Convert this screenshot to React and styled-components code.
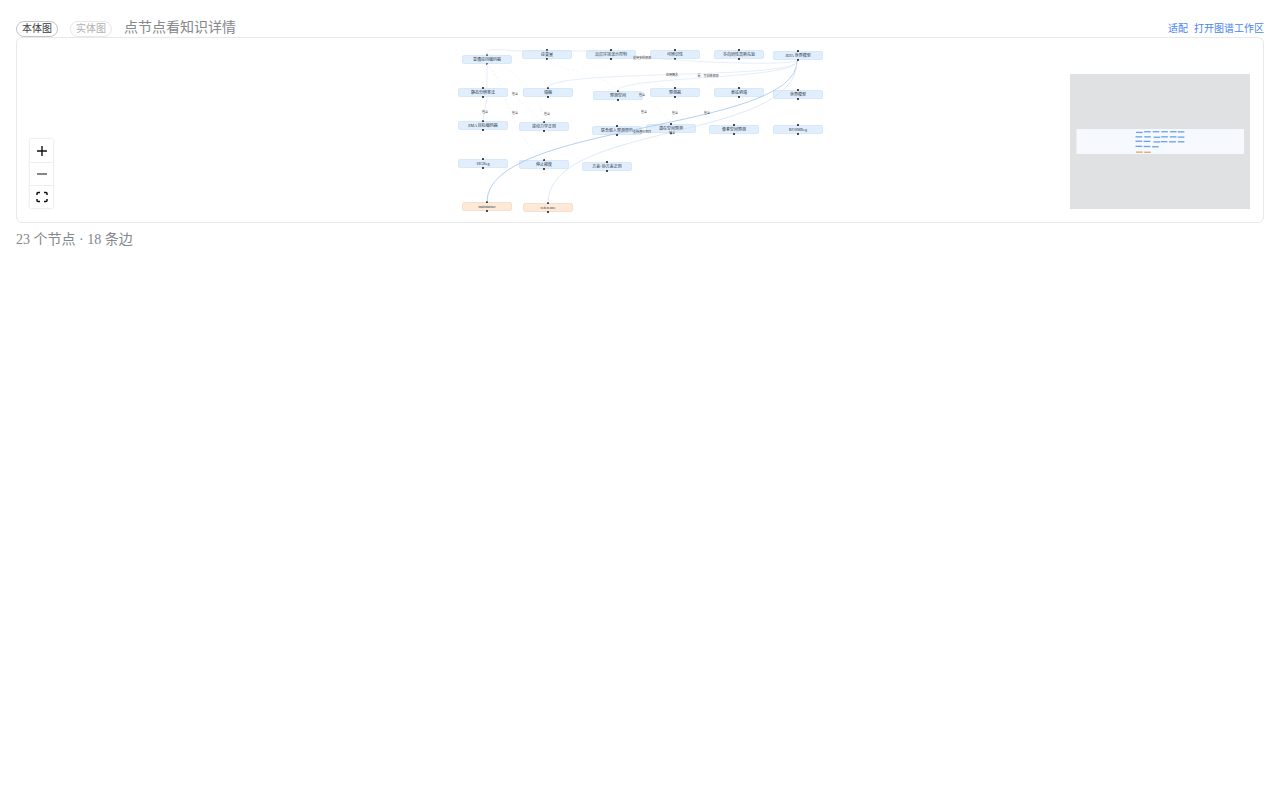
import React from 'react';
import styled, { createGlobalStyle } from 'styled-components';

const Global = createGlobalStyle`
  * { box-sizing: border-box; }
  body { margin: 0; background: #fff; font-family: "Liberation Serif", "Noto Sans CJK SC", serif; }
`;
const Page = styled.main`padding: 18px 16px;`;
const Toolbar = styled.header`
  display: flex; align-items: center; height: 19px;
`;
const Tab = styled.button`
  width: 42px; height: 16px; margin: 2px 12px 0 0; padding: 0;
  border: 1px solid ${p => (p['aria-pressed'] ? '#c2c4c6' : '#e6e7e8')};
  border-radius: 8px; background: #fff; font: inherit; font-size: 10px; line-height: 14px;
  color: ${p => (p['aria-pressed'] ? '#3c3c3c' : '#b0b0b0')};
`;
const Hint = styled.span`font-size: 14px; line-height: 18px; color: #84878b;`;
const Links = styled.nav`
  display: flex; gap: 6px; margin-left: auto; padding-top: 2px; font-size: 10px; line-height: 18px;
  a { color: #4a86ee; text-decoration: none; }
`;
const Canvas = styled.section`
  position: relative; height: 186px; border: 1px solid #e8e9ea; border-radius: 6px; overflow: hidden;
`;
const Graph = styled.div`position: relative; width: 364px; height: 184px; margin: 0 auto;`;
const Edges = styled.svg`position: absolute; inset: 0; width: 364px; height: 184px; fill: none;`;
const Node = styled.div`
  position: absolute; left: ${p => p.$x}px; top: ${p => p.$y}px; width: 50px; height: 9px;
  border: 1px solid ${p => (p.$warm ? '#f8dfca' : '#d8e8fa')}; border-radius: 2px;
  background: ${p => (p.$warm ? '#fce9d9' : '#e1eefc')};
  color: #26323f; font-size: 4px; line-height: 7px; text-align: center; white-space: nowrap;
  &::before, &::after {
    content: ""; position: absolute; left: 23px; width: 2px; height: 2px; border-radius: 1px; background: #111;
  }
  &::before { top: -2px; }
  &::after { bottom: -2px; }
`;
const EdgeLabel = styled.span`
  position: absolute; left: ${p => p.$x}px; top: ${p => p.$y}px; transform: translate(-50%, -50%);
  font-size: 3px; line-height: 3px; color: #333; white-space: nowrap;
`;
const Controls = styled.div`
  position: absolute; left: 12px; bottom: 13px; display: flex; flex-direction: column;
  width: 25px; border: 1px solid #f0f0f0; border-radius: 3px; box-shadow: 0 0 2px #0001;
`;
const Control = styled.button`
  display: grid; place-items: center; height: 23px; padding: 0; border: 0; background: #fff;
  & + & { border-top: 1px solid #eee; }
  svg { width: 12px; height: 12px; fill: none; stroke: #111; }
`;
const MiniMap = styled.svg`
  position: absolute; right: 13px; bottom: 13px; width: 180px; height: 135px; background: #dfe1e3;
`;
const Status = styled.footer`padding-top: 8px; font-size: 14px; line-height: 18px; color: #84878b;`;

const nodes = [
  [4, 17, '普通应用编码器'], [64, 12, '应变量'], [128, 12, '高层环境演示控制'], [192, 12, '可辨识性'], [256, 12, '多向同性高斯先验'], [315, 13, 'JEPA 世界模型'],
  [0, 50, '静态分辨率法'], [65, 50, '塌缩'], [135, 53, '预测空间'], [192, 50, '预测器'], [256, 50, '表征坍塌'], [315, 52, '世界模型'],
  [0, 83, 'EMA 目标编码器'], [61, 84, '逆动力学正则'], [134, 88, '联合嵌入预测架构'], [188, 86, '潜在空间预测'], [251, 87, '像素空间预测'], [315, 87, 'KOSMReg'],
  [0, 121, 'SIGReg'], [61, 122, '停止梯度'], [124, 124, '方差-协方差正则'],
  [4, 164, 'maintainer', true], [65, 165, 'reference', true],
];
const labels = [
  [184, 20, '支持多样预测'], [214, 37, '应用概念'], [250, 38, '是、可训练预测'],
  [57, 56, '包含'], [184, 57, '包含'], [27, 74, '包含'], [57, 75, '包含'], [89, 76, '包含'],
  [186, 74, '包含'], [217, 75, '包含'], [249, 75, '包含'], [184, 94, '支持潜在空间'], [214, 95, '包含'],
];

export default function App() {
  return (
    <>
      <Global />
      <Page>
        <Toolbar>
          <Tab aria-pressed={true}>本体图</Tab>
          <Tab aria-pressed={false}>实体图</Tab>
          <Hint>点节点看知识详情</Hint>
          <Links><a href="#fit">适配</a><a href="#workspace">打开图谱工作区</a></Links>
        </Toolbar>
        <Canvas>
          <Graph>
            {nodes.map(([x, y, t, warm], i) => <Node key={i} $x={x} $y={y} $warm={warm}>{t}</Node>)}
            <Edges viewBox="0 0 364 184" aria-hidden="true">
              <g stroke="#d5e3f5" strokeWidth="0.6">
                <path d="M29 15V50M29 59L25 83" />
                <path d="M29 17C29 8 40 13 70 13H128C190 22 310 29 339 23" />
                <path d="M90 50C90 31 339 42 339 23M160 53C160 38 339 42 339 23" />
              </g>
              <g stroke="#e3ebf5" strokeWidth="0.5" strokeDasharray="2 2">
                <path d="M29 26C44 45 57 60 86 84M29 26C50 50 50 95 86 122M29 15C60 38 85 60 86 84" />
                <path d="M89 21C100 34 150 36 160 53M185 53C194 68 207 75 213 86" />
              </g>
              <path d="M339 23C339 94 29 84 29 164" stroke="#a9caf5" strokeWidth="0.9" />
              <path d="M339 23C339 104 90 84 90 165" stroke="#d0e0f5" strokeWidth="0.7" />
            </Edges>
            {labels.map(([x, y, t], i) => <EdgeLabel key={i} $x={x} $y={y}>{t}</EdgeLabel>)}
          </Graph>
          <Controls>
            <Control aria-label="放大"><svg viewBox="0 0 12 12"><path d="M6 1V11M1 6H11" strokeWidth="1.4" /></svg></Control>
            <Control aria-label="缩小"><svg viewBox="0 0 12 12"><path d="M1 6H11" strokeWidth="1.2" /></svg></Control>
            <Control aria-label="适配视图"><svg viewBox="0 0 12 12"><path d="M4 1.5H2Q1 1.5 1 2.5V4M8 1.5H10Q11 1.5 11 2.5V4M1 8V9.500Q1 10.500 2 10.500H4M11 8V9.500Q11 10.500 10 10.500H8" strokeWidth="1.5" /></svg></Control>
          </Controls>
          <MiniMap viewBox="0 0 180 135" role="img" aria-label="缩略图">
            <rect x="6.500" y="55" width="167.500" height="25" fill="#f6fafe" />
            {nodes.map(([x, y, , warm], i) => (
              <rect key={i} x={65.500 + x * 0.134} y={55.500 + y * 0.134} width="6.700" height="1.300" fill={warm ? '#e0a565' : '#6aa0ec'} />
            ))}
          </MiniMap>
        </Canvas>
        <Status>23 个节点 · 18 条边</Status>
      </Page>
    </>
  );
}
